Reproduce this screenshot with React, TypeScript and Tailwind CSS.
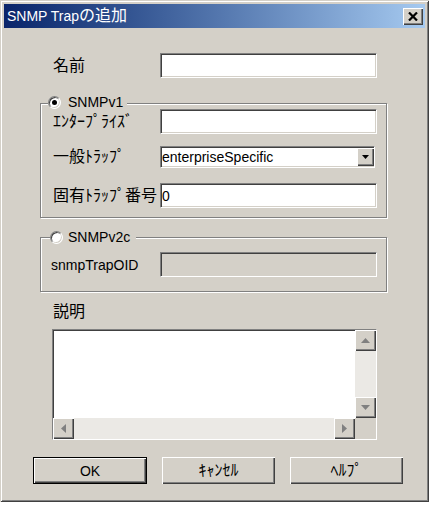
import React from "react";

const sunken =
  "border border-t-[#808080] border-l-[#808080] border-b-white border-r-white shadow-[inset_1px_1px_0_#404040,inset_-1px_-1px_0_#d4d0c8]";
const raised =
  "bg-[#d4d0c8] shadow-[inset_1px_1px_0_#fff,inset_-1px_-1px_0_#404040,inset_-2px_-2px_0_#808080]";
const etched =
  "border border-[#808080] shadow-[inset_1px_1px_0_#fff,1px_1px_0_#fff]";

function J({ children }: { children: React.ReactNode }) {
  return <span className="text-[16px]">{children}</span>;
}

function Radio({ checked }: { checked?: boolean }) {
  return (
    <div className="w-[13px] h-[13px] rounded-full bg-white border border-t-[#808080] border-l-[#808080] border-b-white border-r-[#ffffff] shadow-[inset_1px_1px_0_#404040,inset_-1px_-1px_0_#d4d0c8] flex items-center justify-center">
      {checked && <div className="w-[5px] h-[5px] rounded-full bg-black" />}
    </div>
  );
}

function Arrow({ dir, color = "#808080", size = 9 }: { dir: "up" | "down" | "left" | "right"; color?: string; size?: number }) {
  const h = Math.ceil(size / 2);
  const pts: Record<string, string> = {
    up: `0,${h} ${size},${h} ${size / 2},0`,
    down: `0,0 ${size},0 ${size / 2},${h}`,
    left: `${h},0 ${h},${size} 0,${size / 2}`,
    right: `0,0 0,${size} ${h},${size / 2}`,
  };
  const horiz = dir === "up" || dir === "down";
  const w = horiz ? size : h;
  const hh = horiz ? h : size;
  return (
    <svg width={w} height={hh} viewBox={`0 0 ${w} ${hh}`}>
      <polygon points={pts[dir]} fill={color} />
    </svg>
  );
}

function ScrollBtn({ dir, className = "" }: { dir: "up" | "down" | "left" | "right"; className?: string }) {
  return (
    <div className={`${raised} w-[21px] h-[21px] flex items-center justify-center shrink-0 ${className}`}>
      <Arrow dir={dir} />
    </div>
  );
}

function Button({ children, def }: { children: React.ReactNode; def?: boolean }) {
  if (def) {
    return (
      <div className="w-[114px] h-[27px] border border-black">
        <div className={`${raised} w-full h-full flex items-center justify-center`}>{children}</div>
      </div>
    );
  }
  return <div className={`${raised} w-[113px] h-[27px] flex items-center justify-center`}>{children}</div>;
}

export default function App() {
  return (
    <div
      className="w-[433px] h-[505px] bg-white text-black text-[14px] leading-none"
      style={{ fontFamily: "'Liberation Sans', 'Noto Sans CJK JP', sans-serif" }}
    >
      <div className="w-[429px] h-[502px] bg-[#d4d0c8] p-[4px] flex flex-col shadow-[inset_1px_1px_0_#d4d0c8,inset_-1px_-1px_0_#404040,inset_2px_2px_0_#fff,inset_-2px_-2px_0_#808080]">
        {/* Title bar */}
        <div className="h-[24px] shrink-0 bg-gradient-to-r from-[#0a246a] to-[#a6caf0] flex items-center pl-[3px] pr-[2px]">
          <span className="text-white text-[14px] flex-1">
            SNMP Trap<J>の追加</J>
          </span>
          <div className={`${raised} w-[20px] h-[17px] flex items-center justify-center`}>
            <svg width="10" height="9" viewBox="0 0 10 9">
              <path d="M1 0.5 L9 8.5 M9 0.5 L1 8.5" stroke="black" strokeWidth="2.2" />
            </svg>
          </div>
        </div>

        {/* 名前 */}
        <div className="mt-[25px] flex items-center">
          <div className="ml-[49px] w-[107px]">
            <J>名前</J>
          </div>
          <div className={`${sunken} w-[217px] h-[25px] bg-white`} />
        </div>

        {/* SNMPv1 group */}
        <div className={`${etched} relative mt-[25px] ml-[36px] w-[347px] h-[115px] pt-[5px] pl-[12px] flex flex-col`}>
          <div className="absolute left-[7px] top-[-10px] h-[16px] flex items-center bg-[#d4d0c8] pr-[4px]">
            <Radio checked />
            <span className="ml-[7px]">SNMPv1</span>
          </div>
          <div className="flex items-center">
            <div className="w-[107px]">
              <J>ｴﾝﾀｰﾌﾟﾗｲｽﾞ</J>
            </div>
            <div className={`${sunken} w-[217px] h-[25px] bg-white`} />
          </div>
          <div className="flex items-center mt-[12px]">
            <div className="w-[107px]">
              <J>一般ﾄﾗｯﾌﾟ</J>
            </div>
            <div className={`${sunken} w-[215px] h-[22px] bg-white flex items-center pl-[1px]`}>
              <span className="flex-1">enterpriseSpecific</span>
              <div className={`${raised} w-[17px] h-[18px] flex items-center justify-center`}>
                <Arrow dir="down" color="#000" size={7} />
              </div>
            </div>
          </div>
          <div className="flex items-center mt-[15px]">
            <div className="w-[107px]">
              <J>固有ﾄﾗｯﾌﾟ番号</J>
            </div>
            <div className={`${sunken} w-[217px] h-[25px] bg-white flex items-center pl-[1px]`}>
              <span>0</span>
            </div>
          </div>
        </div>

        {/* SNMPv2c group */}
        <div className={`${etched} relative mt-[19px] ml-[36px] w-[347px] h-[55px] pt-[14px] pl-[10px] flex flex-col`}>
          <div className="absolute left-[9px] top-[-9px] h-[16px] flex items-center bg-[#d4d0c8] pr-[6px]">
            <Radio />
            <span className="ml-[5px]">SNMPv2c</span>
          </div>
          <div className="flex items-center">
            <div className="w-[109px]">snmpTrapOID</div>
            <div className={`${sunken} w-[217px] h-[25px] bg-[#d4d0c8]`} />
          </div>
        </div>

        {/* 説明 */}
        <div className="mt-[10px] ml-[49px] h-[20px] flex items-center">
          <J>説明</J>
        </div>
        <div className={`${sunken} mt-[7px] ml-[48px] w-[325px] h-[111px] bg-white flex flex-col`}>
          <div className="flex flex-1">
            <div className="flex-1" />
            <div className="w-[21px] flex flex-col">
              <ScrollBtn dir="up" />
              <div className="flex-1 bg-[#ebe9e5]" />
              <ScrollBtn dir="down" />
            </div>
          </div>
          <div className="flex h-[21px]">
            <ScrollBtn dir="left" />
            <div className="flex-1 bg-[#ebe9e5]" />
            <ScrollBtn dir="right" />
            <div className="w-[21px] bg-[#d4d0c8]" />
          </div>
        </div>

        {/* Buttons */}
        <div className="mt-[17px] ml-[29px] flex gap-[15px]">
          <Button def>OK</Button>
          <Button>
            <J>ｷｬﾝｾﾙ</J>
          </Button>
          <Button>
            <J>ﾍﾙﾌﾟ</J>
          </Button>
        </div>
      </div>
    </div>
  );
}
